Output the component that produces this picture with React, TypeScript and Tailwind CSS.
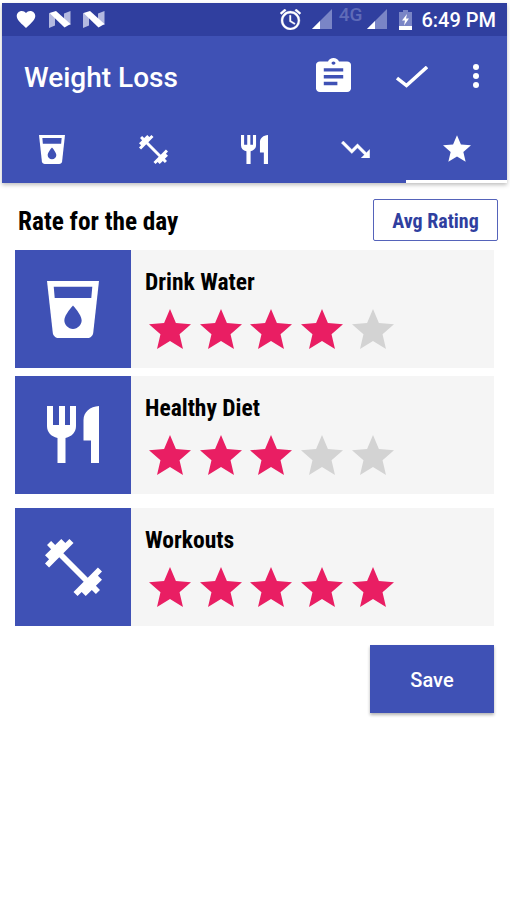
import type { ReactNode } from "react";

function DrinkIcon({ className }: { className?: string }) {
  return (
    <svg viewBox="3 2 18 20" className={className} preserveAspectRatio="none">
      <path fill="#fff" d="M3 2l2.01 18.23C5.13 21.23 5.97 22 7 22h10c1.03 0 1.87-.77 1.99-1.77L21 2H3z" />
      <path
        fill="#3f51b5"
        d="M12 18.8c-1.66 0-3-1.34-3-3 0-2 3-5.2 3-5.2s3 3.2 3 5.2c0 1.66-1.34 3-3 3zM18.33 8H5.67l-.34-4h13.35z"
      />
    </svg>
  );
}

function DietIcon({ className }: { className?: string }) {
  return (
    <svg viewBox="0 0 52 57" className={className} fill="#fff" preserveAspectRatio="none">
      <path d="M0 0h6v19h6V0h6v19h5V0h6v20c0 6-4 10.500-10.500 12V57h-8V32C4 30.500 0 26 0 20z" />
      <path d="M52 0v57h-8V34.500h-7.500V14C36.500 6 43 0.500 52 0z" />
    </svg>
  );
}

function DumbbellIcon({ className }: { className?: string }) {
  return (
    <svg viewBox="2 2 20 20" className={className} fill="#fff">
      <path d="M20.57 14.86L22 13.43 20.57 12 17 15.57 8.43 7 12 3.43 10.57 2 9.14 3.43 7.71 2 5.57 4.14 4.14 2.71 2.71 4.14l1.43 1.43L2 7.71l1.43 1.43L2 10.57 3.43 12 7 8.43 15.57 17 12 20.57 13.43 22l1.43-1.43L16.29 22l2.14-2.14 1.43 1.43 1.43-1.43-1.43-1.43L22 16.29z" />
    </svg>
  );
}

function TrendIcon({ className }: { className?: string }) {
  return (
    <svg viewBox="2 6 20 12" className={className} fill="#fff" stroke="#fff" strokeWidth="0.3">
      <path d="M16 18l2.290-2.290-4.880-4.880-4 4L2 7.410 3.410 6l6 6 4-4 6.300 6.290L22 12v6z" />
    </svg>
  );
}

function StarIcon({ className }: { className?: string }) {
  return (
    <svg viewBox="2 2 20 19" className={className} fill="currentColor">
      <path d="M12 17.270L18.180 21l-1.640-7.030L22 9.240l-7.190-.61L12 2 9.190 8.630 2 9.240l5.460 4.730L5.820 21z" />
    </svg>
  );
}

function NougatIcon() {
  return (
    <svg viewBox="0 0 22 17" className="h-[17px] w-[22px]">
      <path fill="#b3b9e0" d="M0 2l6 2v10.500L0 17zM15 2.500L21.500 0v14L15 12z" />
      <path fill="#fff" d="M0.500 2L7 0l14.500 13-6 3.500z" />
    </svg>
  );
}

function SignalIcon() {
  return (
    <svg viewBox="0 0 20 20" className="h-5 w-5">
      <path fill="#7a85c6" d="M20 0v20H0z" />
      <path fill="#fff" d="M8 12v8H0z" />
    </svg>
  );
}

function StatusBar() {
  return (
    <div className="flex h-[33px] items-center bg-[#303f9f] pl-[14px] pr-[11px] text-white">
      <svg viewBox="2 3 20 18.350" className="h-[17px] w-5" fill="#fff">
        <path d="M12 21.350l-1.450-1.320C5.400 15.360 2 12.280 2 8.500 2 5.420 4.420 3 7.500 3c1.740 0 3.410.81 4.500 2.090C13.090 3.810 14.760 3 16.500 3 19.580 3 22 5.420 22 8.500c0 3.780-3.400 6.860-8.550 11.540z" />
      </svg>
      <div className="ml-[13px] flex gap-3">
        <NougatIcon />
        <NougatIcon />
      </div>
      <svg viewBox="2 2 20 20" className="ml-auto h-[21px] w-[21px]" fill="#fff" stroke="#fff" strokeWidth="0.3">
        <path d="M22 5.720l-4.600-3.860-1.290 1.530 4.600 3.860L22 5.720zM7.880 3.390L6.600 1.860 2 5.710l1.290 1.530 4.590-3.850zM12.500 8H11v6l4.750 2.850.75-1.230-4-2.370V8zM12 4c-4.970 0-9 4.030-9 9s4.020 9 9 9a9 9 0 000-18zm0 16c-3.870 0-7-3.130-7-7s3.130-7 7-7 7 3.130 7 7-3.130 7-7 7z" />
      </svg>
      <div className="ml-[11px] mt-[-1px] flex">
        <SignalIcon />
        <span className="ml-[7px] mr-[5px] mt-[-4px] text-[19px] font-medium leading-5 text-[#5f6bb8]">4G</span>
        <SignalIcon />
      </div>
      <svg viewBox="0 0 13 20" className="ml-[12px] h-5 w-[13px]">
        <path fill="#7a85c6" d="M4 0h5v2h4v14H0V2h4z" />
        <path fill="#fff" d="M0 16h13v4H0zM8 4L3 10.500h3l-1 5 5-7H7z" />
      </svg>
      <span className="ml-[9px] text-[20px] font-medium leading-6">6:49 PM</span>
    </div>
  );
}

const tabs: { id: string; icon: ReactNode }[] = [
  { id: "water", icon: <DrinkIcon className="h-[29px] w-[26px]" /> },
  { id: "workout", icon: <DumbbellIcon className="h-[29px] w-[29px]" /> },
  { id: "diet", icon: <DietIcon className="h-[29px] w-[27px]" /> },
  { id: "weight", icon: <TrendIcon className="h-[17px] w-[29px]" /> },
  { id: "rating", icon: <StarIcon className="mb-px h-[27px] w-[28px]" /> },
];

function Header() {
  return (
    <header className="bg-[#3f51b5] text-white shadow-[0_2px_4px_rgba(0,0,0,0.25)]">
      <StatusBar />
      <div className="flex h-[82px] items-center pl-[22px] pr-[28px]">
        <h1 className="mt-[2px] text-[28px] font-medium">Weight Loss</h1>
        <svg viewBox="3 1 18 20" className="ml-auto mt-[-4px] h-[34px] w-[35px]" fill="#fff" preserveAspectRatio="none">
          <path d="M19 3h-4.180C14.400 1.840 13.300 1 12 1c-1.300 0-2.400.84-2.820 2H5c-1.100 0-2 .9-2 2v14c0 1.100.9 2 2 2h14c1.100 0 2-.9 2-2V5c0-1.100-.9-2-2-2zm-7 0c.55 0 1 .45 1 1s-.45 1-1 1-1-.45-1-1 .45-1 1-1zm2 14H7v-2h7v2zm3-4H7v-2h10v2zm0-4H7V7h10v2z" />
        </svg>
        <svg viewBox="0 0 32 22" className="ml-[45px] h-[22px] w-8" fill="none" stroke="#fff" strokeWidth="3.500">
          <path d="M1 12L10.500 19.500 31 1" />
        </svg>
        <svg viewBox="0 0 6 24" className="ml-[45px] mt-[-2px] h-6 w-1.5" fill="#fff">
          <circle cx="3" cy="3" r="3" />
          <circle cx="3" cy="12" r="3" />
          <circle cx="3" cy="21" r="3" />
        </svg>
      </div>
      <nav className="grid h-[65px] grid-cols-5">
        {tabs.map((tab) => (
          <button
            key={tab.id}
            className={
              tab.id === "rating"
                ? "flex items-center justify-center border-b-[3px] border-white"
                : "flex items-center justify-center border-b-[3px] border-transparent pr-px"
            }
          >
            {tab.icon}
          </button>
        ))}
      </nav>
    </header>
  );
}

function RatingRow({ title, rating, icon }: { title: string; rating: number; icon: ReactNode }) {
  return (
    <div className="flex h-[118px] bg-[#f5f5f5]">
      <div className="flex w-[116px] items-center justify-center bg-[#3f51b5]">{icon}</div>
      <div className="pl-[14px] pt-[17px]">
        <h3 className="text-[23.5px] font-bold leading-[30px] font-stretch-condensed">{title}</h3>
        <div className="mt-3 flex gap-[8.700px] pl-[4px]">
          {[1, 2, 3, 4, 5].map((n) => (
            <StarIcon
              key={n}
              className={n <= rating ? "h-10 w-[42px] text-[#e91e63]" : "h-10 w-[42px] text-[#d3d3d3]"}
            />
          ))}
        </div>
      </div>
    </div>
  );
}

export default function App() {
  return (
    <div className="h-[900px] w-[510px] bg-white pl-[2px] pr-[3px] pt-[3px] font-[Roboto,sans-serif]">
      <Header />
      <main className="px-[13px]">
        <div className="mr-[-4px] flex h-[67px] items-start justify-between pl-[3px] pt-[16px]">
          <h2 className="mt-[6px] text-[25.3px] font-bold leading-[34px] font-stretch-condensed">Rate for the day</h2>
          <button className="h-[42px] w-[125px] rounded-[2px] border border-[#5563ba] pt-[2px] text-[20px] font-bold text-[#303f9f] font-stretch-condensed">
            Avg Rating
          </button>
        </div>
        <RatingRow title="Drink Water" rating={4} icon={<DrinkIcon className="h-[57px] w-[52px]" />} />
        <div className="h-2" />
        <RatingRow title="Healthy Diet" rating={3} icon={<DietIcon className="mb-[2px] h-[57px] w-[52px]" />} />
        <div className="h-[14px]" />
        <RatingRow title="Workouts" rating={5} icon={<DumbbellIcon className="h-[57px] w-[57px]" />} />
        <div className="mt-[19px] flex justify-end">
          <button className="h-[68px] w-[124px] bg-[#3f51b5] pt-px text-[20px] font-medium text-white shadow-[0_2px_3px_rgba(0,0,0,0.3)]">
            Save
          </button>
        </div>
      </main>
    </div>
  );
}
